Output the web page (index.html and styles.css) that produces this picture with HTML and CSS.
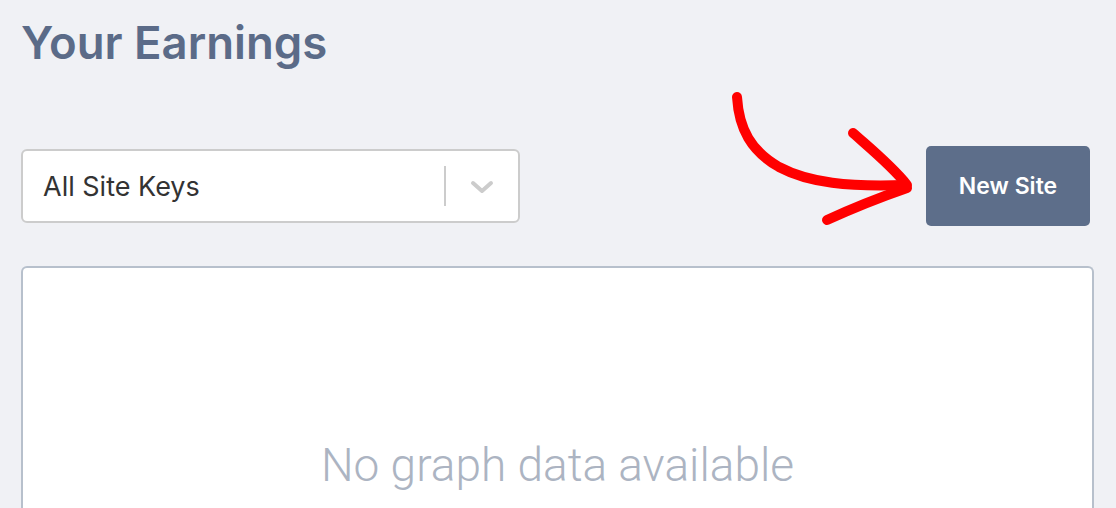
FILE: index.html
```html
<!DOCTYPE html>
<html lang="en">
<head>
    <meta charset="UTF-8">
    <meta name="viewport" content="width=device-width, initial-scale=1.0">
    <title>Your Earnings</title>
    <link rel="stylesheet" href="styles.css">
</head>
<body>
    <div class="page">
        <h1 class="title">Your Earnings</h1>
        <div class="toolbar">
            <div class="siteSelect">
                <span class="siteSelect-value">All Site Keys</span>
                <span class="siteSelect-sep"></span>
                <svg class="siteSelect-arrow" width="24" height="14" viewBox="0 0 24 14">
                    <path d="M3 3 L12 11 L21 3" fill="none" stroke="#cccccc" stroke-width="4" stroke-linecap="round" stroke-linejoin="round"/>
                </svg>
            </div>
            <svg class="pointer" width="220" height="150" viewBox="0 0 220 150">
                <path d="M38 18 C40 50 52 72 80 88 C110 104 150 108 206 106" fill="none" stroke="#ff0000" stroke-width="10" stroke-linecap="round"/>
                <path d="M154 54 C172 70 194 88 208 106" fill="none" stroke="#ff0000" stroke-width="10" stroke-linecap="round"/>
                <path d="M128 141 C152 130 182 118 208 109" fill="none" stroke="#ff0000" stroke-width="10" stroke-linecap="round"/>
            </svg>
            <button class="newSite">New Site</button>
        </div>
        <div class="graphCard">
            <p class="graphEmpty">No graph data available</p>
        </div>
    </div>
</body>
</html>
```

FILE: styles.css
```css
body{
    margin: 0;
    background: #f0f1f5;
    font-family: Inter, "Noto Sans", sans-serif;
}
.page{
    padding: 0 22px 0 21px;
}
.title{
    margin: 0;
    padding-top: 14px;
    font-size: 45.5px;
    font-weight: 600;
    line-height: 58px;
    color: #5b6b88;
}
.toolbar{
    position: relative;
    display: flex;
    justify-content: space-between;
    align-items: center;
    margin-top: 74px;
    padding-right: 4px;
}
.siteSelect{
    display: flex;
    align-items: center;
    box-sizing: border-box;
    width: 499px;
    height: 74px;
    background: #fff;
    border: 2px solid #cccccc;
    border-radius: 6px;
    padding-left: 20px;
}
.siteSelect-value{
    flex: 1;
    font-size: 27px;
    color: #333;
}
.siteSelect-sep{
    width: 2px;
    height: 40px;
    background: #cccccc;
}
.siteSelect-arrow{
    margin: 2px 24px 0 24px;
}
.pointer{
    position: absolute;
    left: 678px;
    top: -67px;
    overflow: visible;
}
.newSite{
    width: 164px;
    height: 80px;
    border: none;
    border-radius: 5px;
    background: #5d6e8a;
    color: #fff;
    font-family: Inter, "Noto Sans", sans-serif;
    font-size: 23px;
    font-weight: 600;
}
.graphCard{
    box-sizing: border-box;
    height: 260px;
    margin-top: 40px;
    background: #fff;
    border: 2px solid #b7c0cc;
    border-bottom: none;
    border-radius: 6px 6px 0 0;
    text-align: center;
}
.graphEmpty{
    margin: 0;
    padding-top: 170px;
    font-family: Roboto, sans-serif;
    font-size: 46px;
    font-weight: 300;
    color: #acb4c2;
}
```
